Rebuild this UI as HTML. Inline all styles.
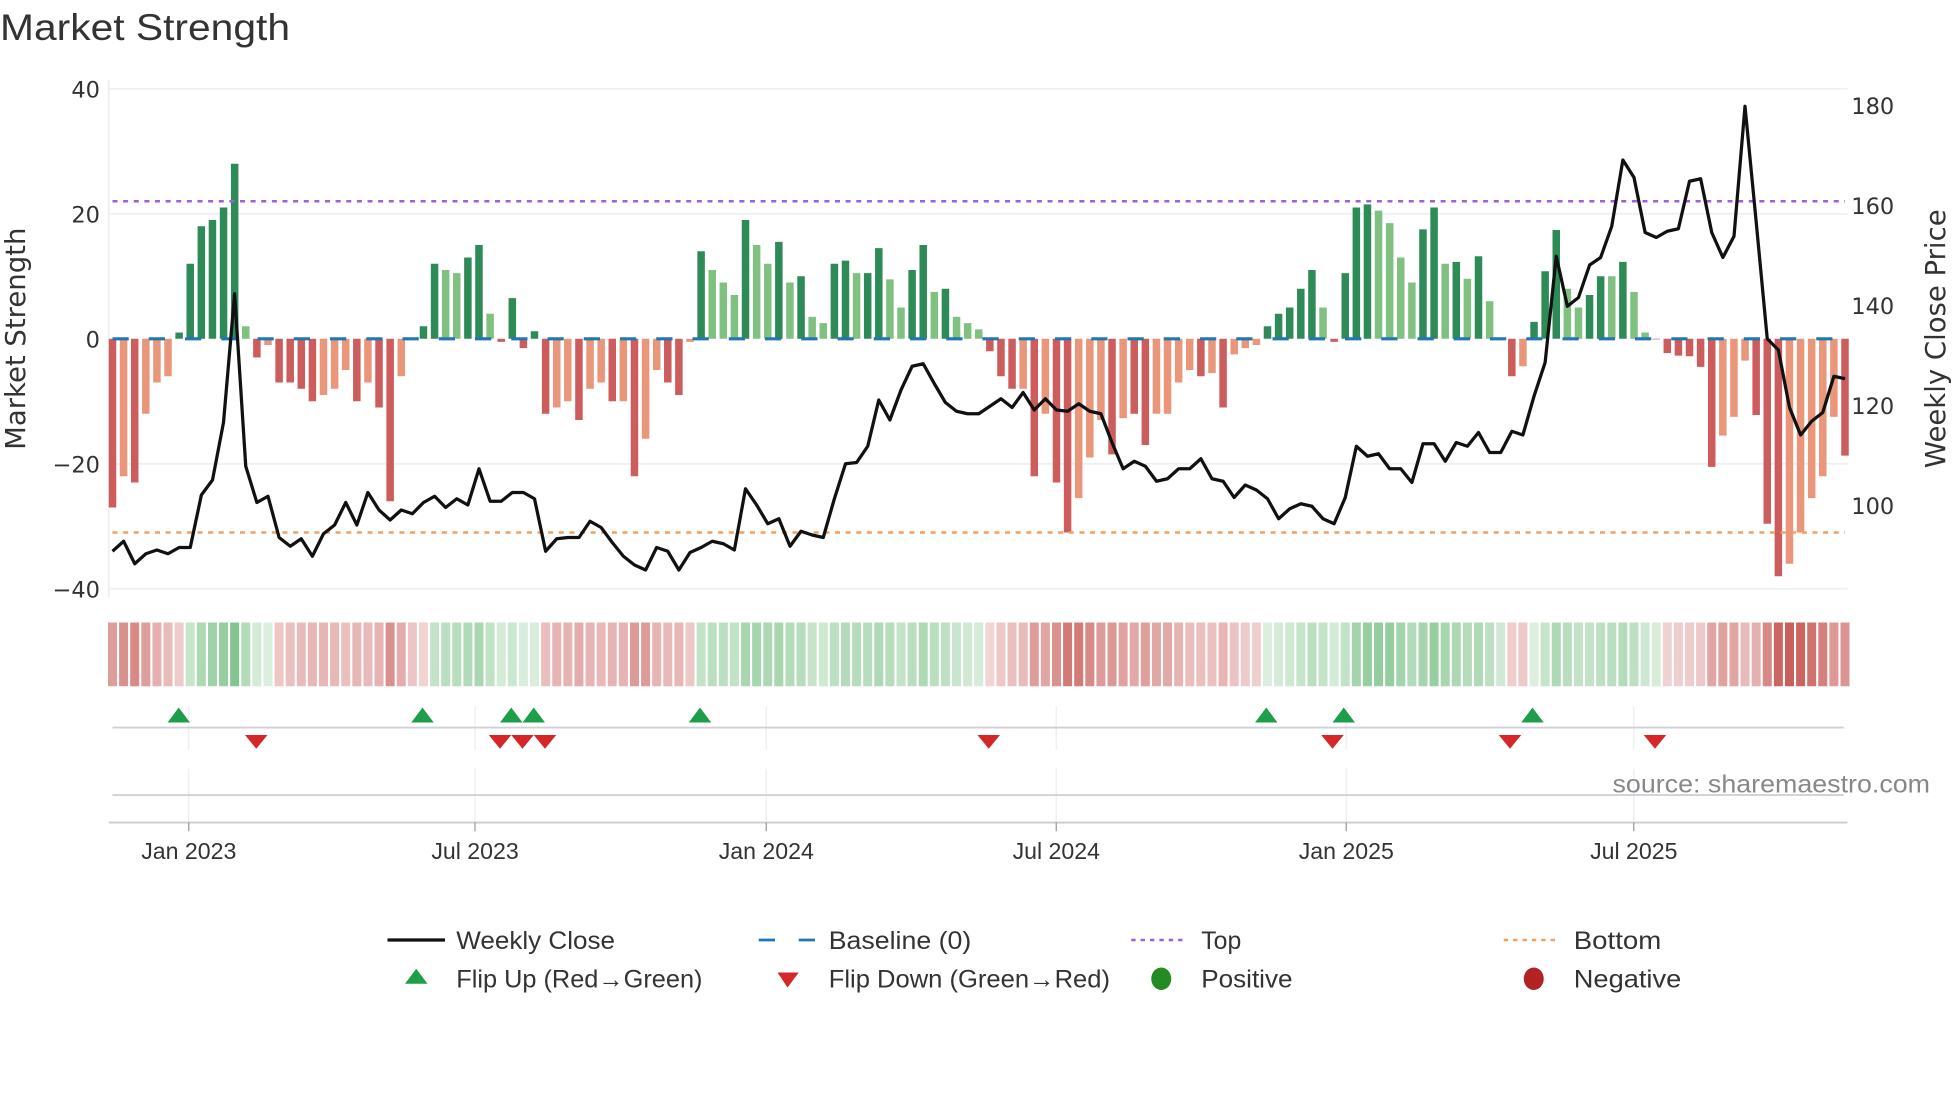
<!DOCTYPE html>
<html><head><meta charset="utf-8"><style>
html,body{margin:0;padding:0;background:#fff;width:1960px;height:1102px;overflow:hidden}
svg{display:block}
.t{font-family:"Liberation Sans",sans-serif;fill:#333}
.d{font-family:"DejaVu Sans",sans-serif;fill:#333}
</style></head><body>
<svg id="s" width="1960" height="1102" viewBox="0 0 1568 881.6" preserveAspectRatio="none" xmlns="http://www.w3.org/2000/svg">
<rect width="1568" height="882" fill="#fff"/>
<text class="t" x="0" y="32" font-size="30" textLength="232" lengthAdjust="spacingAndGlyphs">Market Strength</text>
<g stroke="#eef0f5" stroke-width="1.5">
<line x1="87" y1="71" x2="1478" y2="71"/><line x1="87" y1="171" x2="1478" y2="171"/>
<line x1="87" y1="371" x2="1478" y2="371"/><line x1="87" y1="471" x2="1478" y2="471"/>
<line x1="87" y1="64" x2="87" y2="478"/>
</g>
<g class="d" font-size="18" text-anchor="end">
<text x="80" y="78">40</text><text x="80" y="178">20</text><text x="80" y="278">0</text>
<text x="80" y="378">−20</text><text x="80" y="478">−40</text>
</g>
<g class="d" font-size="18">
<text x="1481" y="91">180</text><text x="1481" y="171">160</text><text x="1481" y="251">140</text>
<text x="1481" y="331">120</text><text x="1481" y="411">100</text>
</g>
<text class="d" font-size="22" transform="translate(20,271) rotate(-90)" text-anchor="middle">Market Strength</text>
<text class="d" font-size="22" transform="translate(1556,271) rotate(-90)" text-anchor="middle">Weekly Close Price</text>
<g id="bars"></g>
<line x1="90" y1="271" x2="1476" y2="271" stroke="#1f77b4" stroke-width="2.5" stroke-dasharray="13,16"/>
<line x1="90" y1="161" x2="1476" y2="161" stroke="#9b5fe0" stroke-width="2" stroke-dasharray="4,4.5"/>
<line x1="90" y1="426" x2="1476" y2="426" stroke="#f0a060" stroke-width="2" stroke-dasharray="4,4.5"/>
<polyline id="pl" fill="none" stroke="#111" stroke-width="2.6" stroke-linejoin="round"/>
<g id="strip"></g>
<g stroke="#eef0f5" stroke-width="1.2">
<line x1="151" y1="565" x2="151" y2="600"/><line x1="380" y1="565" x2="380" y2="600"/><line x1="613" y1="565" x2="613" y2="600"/><line x1="845" y1="565" x2="845" y2="600"/><line x1="1077" y1="565" x2="1077" y2="600"/><line x1="1307" y1="565" x2="1307" y2="600"/>
<line x1="151" y1="615" x2="151" y2="658"/><line x1="380" y1="615" x2="380" y2="658"/><line x1="613" y1="615" x2="613" y2="658"/><line x1="845" y1="615" x2="845" y2="658"/><line x1="1077" y1="615" x2="1077" y2="658"/><line x1="1307" y1="615" x2="1307" y2="658"/>
</g>
<line x1="90" y1="582" x2="1475" y2="582" stroke="#d0d0d8" stroke-width="1.5"/>
<line x1="90" y1="636" x2="1475" y2="636" stroke="#d0d0d8" stroke-width="1.5"/>
<line x1="87" y1="658" x2="1478" y2="658" stroke="#ccc" stroke-width="1.5"/>
<g stroke="#999" stroke-width="1"><line x1="151" y1="658" x2="151" y2="665"/><line x1="380" y1="658" x2="380" y2="665"/><line x1="613" y1="658" x2="613" y2="665"/><line x1="845" y1="658" x2="845" y2="665"/><line x1="1077" y1="658" x2="1077" y2="665"/><line x1="1307" y1="658" x2="1307" y2="665"/></g>
<g id="mk"></g>
<text class="t" x="1290" y="634" font-size="20" textLength="254" lengthAdjust="spacingAndGlyphs" style="fill:#888">source: sharemaestro.com</text>
<g class="t" font-size="18.5" text-anchor="middle">
<text x="151" y="687">Jan 2023</text><text x="380" y="687">Jul 2023</text><text x="613" y="687">Jan 2024</text>
<text x="845" y="687">Jul 2024</text><text x="1077" y="687">Jan 2025</text><text x="1307" y="687">Jul 2025</text>
</g>
<g class="t" font-size="20" lengthAdjust="spacingAndGlyphs">
<line x1="310" y1="752" x2="356" y2="752" stroke="#111" stroke-width="2.6"/>
<text x="365" y="759" textLength="127" lengthAdjust="spacingAndGlyphs">Weekly Close</text>
<line x1="607" y1="752" x2="652" y2="752" stroke="#1f77b4" stroke-width="2.2" stroke-dasharray="13,19"/>
<text x="663" y="759" textLength="114" lengthAdjust="spacingAndGlyphs">Baseline (0)</text>
<line x1="905" y1="752" x2="948" y2="752" stroke="#9b5fe0" stroke-width="2" stroke-dasharray="3.5,4"/>
<text x="961" y="759" textLength="32" lengthAdjust="spacingAndGlyphs">Top</text>
<line x1="1203" y1="752" x2="1247" y2="752" stroke="#f0a060" stroke-width="2" stroke-dasharray="3.5,4"/>
<text x="1259" y="759" textLength="70" lengthAdjust="spacingAndGlyphs">Bottom</text>
<polygon points="333,775 342,787 324,787" fill="#1e9e4a"/>
<text x="365" y="790" textLength="197" lengthAdjust="spacingAndGlyphs">Flip Up (Red→Green)</text>
<polygon points="622,778 639,778 630,790" fill="#d62728"/>
<text x="663" y="790" textLength="225" lengthAdjust="spacingAndGlyphs">Flip Down (Green→Red)</text>
<ellipse cx="929" cy="783" rx="8" ry="9" fill="#228b22"/>
<text x="961" y="790" textLength="73" lengthAdjust="spacingAndGlyphs">Positive</text>
<ellipse cx="1227" cy="783" rx="8" ry="9" fill="#b22222"/>
<text x="1259" y="790" textLength="86" lengthAdjust="spacingAndGlyphs">Negative</text>
</g>
</svg>
<script>
var V=[[-27,1],[-22,0],[-23,1],[-12,0],[-7,0],[-6,0],[1,1],[12,1],[18,1],[19,1],[21,1],[28,1],[2,0],[-3,1],[-1,0],[-7,1],[-7,1],[-8,1],[-10,1],[-9,0],[-8,0],[-5,0],[-10,1],[-7,0],[-11,1],[-26,1],[-6,0],[0,0],[2,1],[12,1],[11,0],[10.5,0],[13,1],[15,1],[4,0],[-0.5,1],[6.5,1],[-1.5,1],[1.2,1],[-12,1],[-11,0],[-10,0],[-13,1],[-8,0],[-7,0],[-10,1],[-10,0],[-22,1],[-16,0],[-5,0],[-7,1],[-9,1],[-0.5,0],
[14,1],[11,0],[9,0],[7,0],[19,1],[15,0],[12,0],[15.5,1],[9,0],[10,1],[3.5,0],[2.5,0],[12,1],[12.5,1],[10.5,0],[10.5,1],[14.5,1],[9.5,0],[5,0],[11,1],[15,1],[7.5,0],[8,1],[3.5,0],[2.5,0],[1.5,0],
[-2,1],[-6,1],[-8,1],[-8,0],[-22,1],[-12,0],[-23,1],[-31,1],[-25.5,0],[-19,0],[-13,0],[-18.5,1],[-12.7,0],[-12,1],[-17,1],[-12,0],[-12,0],[-7,0],[-5,0],[-6,1],[-5.5,0],[-11,1],[-2.5,0],[-1.5,0],[-1,0],
[2,1],[4,1],[5,1],[8,1],[11,1],[5,0],[-0.5,1],[10.5,1],[21,1],[21.5,1],[20.5,0],[18.5,0],[13,0],[9,0],[17.5,1],[21,1],[12,0],[12.3,1],[9.6,0],[13.2,1],[6,0],[0.2,0],[-6,1],[-4.4,0],[2.7,1],[10.8,1],[17.4,1],[8,0],[5,0],[7,1],[10,1],[10,0],[12.3,1],[7.5,0],[1,0],[-0.1,1],[-2.3,1],[-2.7,1],[-2.8,1],[-4.5,1],[-20.5,1],[-15.5,0],[-12.5,0],[-3.5,0],[-12.2,1],[-29.6,1],[-38,1],[-36,0],[-31,0],[-25.5,0],[-22,0],[-12.5,0],[-18.7,1]];
var P=[441,433,451,443,440,443,438,438,396,384,338,235,373,402,397,430,437,431,445,427,420,402,420,394,408,416,408,411,402,397,406,399,404,375,401,401,394,394,399,441,431,430,430,417,422,434,445,452,456,438,441,456,442,438,433,435,440,391,404,419,415,437,425,428,430,399,371,370,357,320,336,312,293,291,307,322,329,331,331,325,319,326,314,328,319,328,329,323,329,331,354,375,369,373,385,383,375,375,367,383,385,398,388,392,399,415,407,403,405,415,419,398,357,365,363,375,375,386,355,355,369,354,357,346,362,362,345,348,317,290,205,245,238,212,206,181,128,142,186,190,185,183,145,143,186,206,189,85,177,271,280,326,348,337,330,301,303];
var N=V.length,st=(1476-90)/(N-1),b='',s='',m='',pts=[],e=0;
function mix(a,c,t){return 'rgb('+[0,1,2].map(function(k){return Math.round(a[k]+(c[k]-a[k])*t)}).join(',')+')';}
for(var i=0;i<N;i++){var x=90+i*st,v=V[i][0],dk=V[i][1];
 var col=v>=0?(dk?'#2e8b57':'#80c080'):(dk?'#cd5c5c':'#e9967a');
 var y=v>=0?271-v*5:271,h=Math.abs(v)*5;
 if(h>0.3)b+='<rect x="'+(x-3)+'" y="'+y+'" width="6" height="'+h+'" fill="'+col+'"/>';
 e=e*0.4+v*0.6;var t=Math.min(1,Math.abs(e)/34);t=0.1+0.9*t;
 var c=e>=0?mix([235,246,236],[95,180,110],t):mix([246,226,226],[200,95,90],t);
 s+='<rect x="'+(x-3.6)+'" y="498" width="7.2" height="51" fill="'+c+'"/>';
 if(i<P.length)pts.push(x.toFixed(1)+','+P[i]);}
document.getElementById('bars').innerHTML=b;
document.getElementById('strip').innerHTML=s;
document.getElementById('pl').setAttribute('points',pts.join(' '));
[143,338,409,427,560,1013,1075,1226].forEach(function(x){m+='<polygon points="'+x+',566 '+(x+9)+',578 '+(x-9)+',578" fill="#1e9e4a"/>';});
[205,400,418,436,791,1066,1208,1324].forEach(function(x){m+='<polygon points="'+(x-9)+',588 '+(x+9)+',588 '+x+',599" fill="#d62728"/>';});
document.getElementById('mk').innerHTML=m;
</script>
</body></html>
